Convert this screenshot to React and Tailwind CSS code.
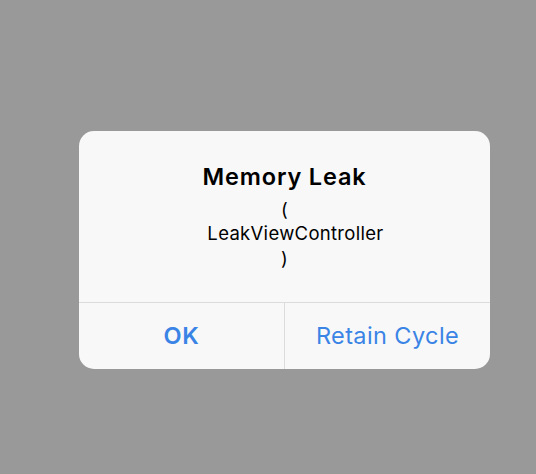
export default function App() {
  return (
    <div className="w-[536px] h-[474px] bg-[#999999] relative" style={{ fontFamily: "Inter, 'Noto Sans', sans-serif" }}>
      <div className="absolute left-[79px] top-[131px] w-[411px] h-[238px] bg-[#f8f8f8] rounded-[15px] overflow-hidden flex flex-col">
        <div className="flex-1 flex flex-col items-center pt-[31px] text-black">
          <div className="text-[23.5px] leading-[30px] font-semibold tracking-[0.85px]">Memory Leak</div>
          <div className="text-[18.5px] leading-[24.5px] text-center mt-[4.5px] tracking-[0.3px] whitespace-pre">
            <div>(</div>
            <div>{"    LeakViewController"}</div>
            <div>)</div>
          </div>
        </div>
        <div className="h-[67px] border-t border-[#dcdcdc] flex text-[#3a84e6]">
          <div className="flex-1 flex items-center justify-center text-[23.5px] font-semibold tracking-[0.6px]">OK</div>
          <div className="w-px bg-[#dcdcdc]" />
          <div className="flex-1 flex items-center justify-center text-[23.5px] tracking-[0.4px]">Retain Cycle</div>
        </div>
      </div>
    </div>
  );
}
